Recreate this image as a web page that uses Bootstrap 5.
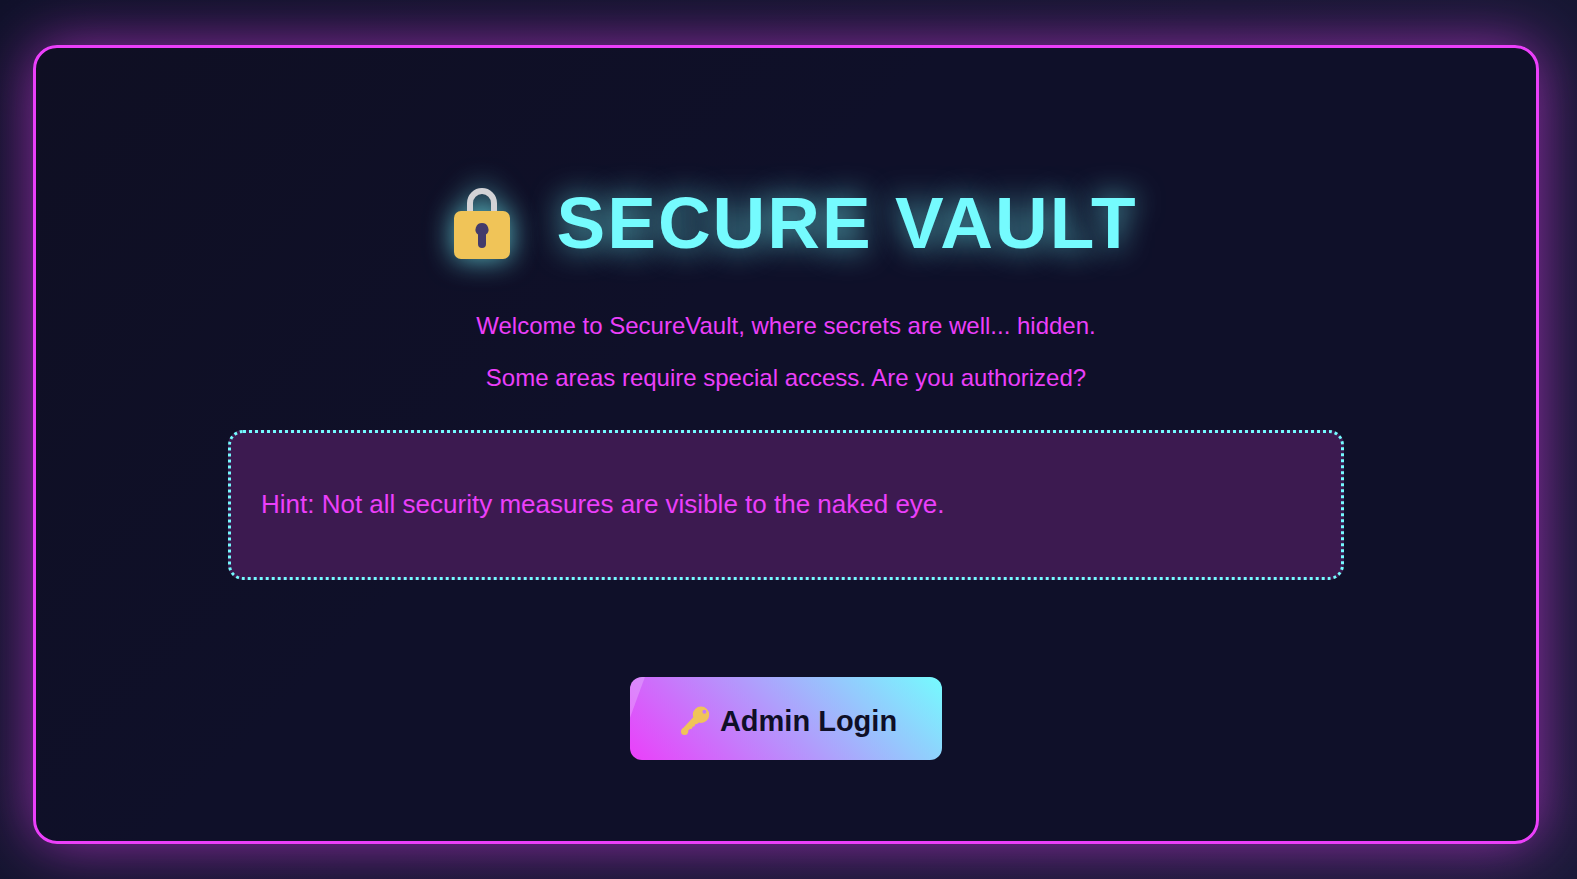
<!DOCTYPE html>
<html lang="en">
<head>
<meta charset="utf-8">
<meta name="viewport" content="width=device-width, initial-scale=1">
<title>Secure Vault</title>
<link href="https://cdn.jsdelivr.net/npm/bootstrap@5.3.0/dist/css/bootstrap.min.css" rel="stylesheet">
<style>
  :root { --cyan: #75fbfe; --magenta: #eb3ffa; --ink: #0f0f27; }
  body {
    font-family: "Liberation Sans", Arial, sans-serif;
    color: var(--magenta);
    background: linear-gradient(135deg, #10122a, #1a1a38) fixed;
  }
  .page { padding: 45px 38px 35px 33px; }
  .vault {
    border: 3px solid var(--magenta);
    border-radius: 24px;
    padding: 127px 192px 81px;
    background: linear-gradient(135deg, #0f0f23, #0f1029 40%, #0f1029);
    box-shadow: 0 0 60px rgba(235, 63, 250, .6);
  }
  .vault-title {
    font-size: 73px;
    line-height: 96px;
    letter-spacing: 2px;
    color: var(--cyan);
    text-shadow: 0 0 30px rgba(117, 251, 254, .75);
    margin-bottom: 29px;
  }
  .vault-title svg { width: 100px; height: 96px; margin-right: 22px; filter: drop-shadow(0 0 14px rgba(117, 251, 254, .75)); }
  .intro { font-size: 24px; line-height: 52px; }
  .hint {
    margin: 26px 0 97px;
    padding: 47px 30px 49px;
    font-size: 26px;
    line-height: 48px;
    border: 3px dotted var(--cyan);
    border-radius: 15px;
    background: #3c1a50;
  }
  .btn-vault, .btn-vault:hover {
    padding: 26px 45px 21px;
    border: 0;
    border-radius: 12px;
    font-size: 29px;
    line-height: 36px;
    color: var(--ink);
    background: linear-gradient(45deg, var(--magenta), var(--cyan));
  }
  .btn-vault::before {
    content: "";
    position: absolute;
    top: 0;
    left: 0;
    width: 15px;
    height: 41px;
    background: rgba(255, 255, 255, .22);
    clip-path: polygon(0 0, 100% 0, 0 100%);
  }
  .btn-vault svg { width: 36px; height: 36px; margin-right: 9px; }
  @media (max-width: 1199px) {
    .vault { padding: 64px 32px; }
  }
</style>
</head>
<body>
<main class="page min-vh-100 d-flex">
  <section class="vault flex-grow-1 text-center">
    <h1 class="vault-title fw-bold d-flex flex-wrap justify-content-center align-items-center"><svg viewBox="0 0 100 96" aria-hidden="true">
        <path d="M35 38V28a12 12 0 0 1 24 0v10" fill="none" stroke="#d3d3d6" stroke-width="6"/>
        <rect x="19" y="36" width="56" height="48" rx="7" fill="#f0c458"/>
        <path d="M47 48a6.500 6.500 0 0 1 4 11.600V69a4 4 0 0 1-8 0V59.600A6.500 6.500 0 0 1 47 48z" fill="#433b6b"/>
      </svg>SECURE VAULT</h1>
    <p class="intro mb-0">Welcome to SecureVault, where secrets are well... hidden.</p>
    <p class="intro mb-0">Some areas require special access. Are you authorized?</p>
    <div class="hint text-start">Hint: Not all security measures are visible to the naked eye.</div>
    <button type="button" class="btn btn-vault fw-bold position-relative overflow-hidden d-inline-flex align-items-center"><svg viewBox="0 0 36 36" aria-hidden="true" fill="#f0c458">
        <path fill-rule="evenodd" d="M26 3.500a8.200 8.200 0 1 0 0 16.400 8.200 8.200 0 0 0 0-16.400zM29.400 6.700a2 2 0 1 1 0 4 2 2 0 0 1 0-4z"/>
        <path d="M7 26.200L18.500 14l5.500 5.500-2 1.600-1.800.2-.6 2-2 .4-.7 2-2 .2-1.700 1.600.1 1.500-1.500 1.500z"/>
        <circle cx="9.500" cy="28.500" r="3.500"/>
      </svg>Admin Login</button>
  </section>
</main>
<script src="https://cdn.jsdelivr.net/npm/bootstrap@5.3.0/dist/js/bootstrap.bundle.min.js"></script>
</body>
</html>
